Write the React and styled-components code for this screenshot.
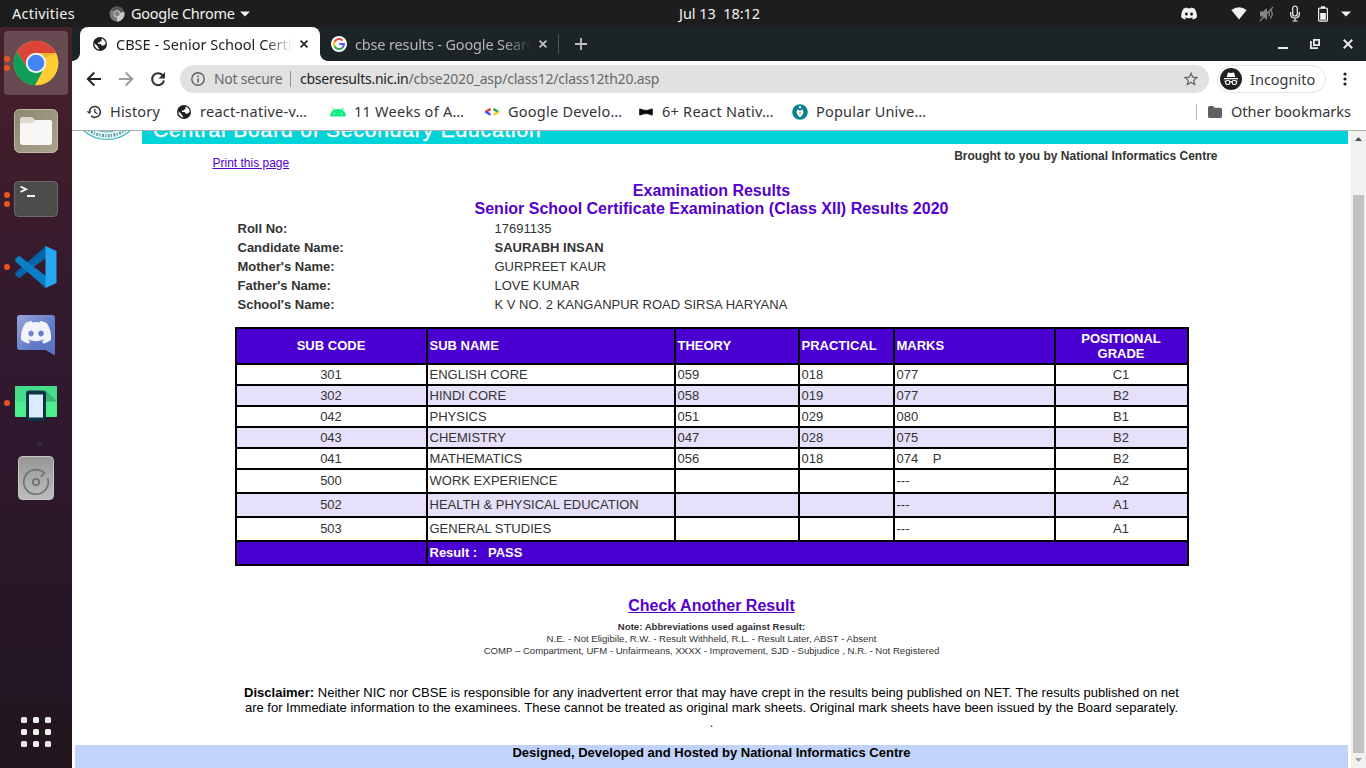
import React from "react";
import styled, { createGlobalStyle } from "styled-components";

const Global = createGlobalStyle`
  *, *::before, *::after { box-sizing: border-box; }
  html, body { margin: 0; padding: 0; background: #fff; overflow: hidden; }
  svg { display: block; flex: none; }
`;

const Desktop = styled.div`
  width: 1366px;
  height: 768px;
  overflow: hidden;
  display: flex;
  flex-direction: column;
  font-family: "Noto Sans", sans-serif;
  font-size: 14.5px;
`;

const Label = styled.span`
  white-space: pre;
  letter-spacing: ${(p) => p.$track || 0}px;
  color: ${(p) => p.$color || "inherit"};
  width: ${(p) => (p.$w ? p.$w + "px" : "auto")};
  flex: none;
  line-height: 20px;
  padding-bottom: ${(p) => p.$lift || 0}px;
`;

/* ---------- system bar ---------- */
const TopBar = styled.header`
  height: 27px;
  flex: none;
  background: #1d1d1d;
  color: #f2f2f2;
  display: grid;
  grid-template-columns: 679px 83px 1fr;
  align-items: center;
`;
const BarLeft = styled.div`
  display: flex;
  align-items: center;
  padding-left: 12px;
`;
const AppMenu = styled.div`
  display: flex;
  align-items: center;
  margin-left: 34px;
  gap: 6px;
`;
const Tray = styled.div`
  display: flex;
  align-items: center;
  justify-content: flex-end;
  padding-right: 15px;
`;
const TrayIcon = styled.span`
  margin-left: ${(p) => p.$gap || 0}px;
`;

const Main = styled.div`
  flex: 1;
  min-height: 0;
  display: flex;
`;

/* ---------- dock ---------- */
const Dock = styled.nav`
  width: 72px;
  flex: none;
  background: linear-gradient(180deg, #47212a 0%, #3d1c2b 20%, #321a2f 40%, #2c172b 65%, #241623 88%, #22161d 100%);
  display: flex;
  flex-direction: column;
  align-items: center;
  padding: 4px 0;
`;
const DockItem = styled.div`
  position: relative;
  width: 64px;
  height: 64px;
  flex: none;
  margin-bottom: 4px;
  border-radius: 4px;
  display: grid;
  place-items: center;
  background: ${(p) => (p.$active ? "rgba(255,255,255,0.19)" : "transparent")};
`;
const Pips = styled.div`
  position: absolute;
  left: 0;
  top: 0;
  height: 64px;
  display: flex;
  flex-direction: column;
  justify-content: center;
  gap: 3px;
`;
const Pip = styled.i`
  width: 6px;
  height: 6px;
  border-radius: 50%;
  background: #e95420;
`;
const DockDivider = styled.div`
  width: 5px;
  height: 4px;
  margin: 3px 0 0 7px;
  background: #372743;
  flex: none;
`;
const AppsSlot = styled(DockItem)`
  margin-top: auto;
  margin-bottom: 0;
`;
const AppsGrid = styled.div`
  display: grid;
  grid-template-columns: repeat(3, 6px);
  gap: 6px;
`;
const AppsDot = styled.i`
  height: 6px;
  border-radius: 1.5px;
  background: #eeeeec;
`;

/* ---------- browser chrome ---------- */
const Browser = styled.main`
  flex: 1;
  min-width: 0;
  display: flex;
  flex-direction: column;
  background: #fff;
`;
const TabStrip = styled.div`
  height: 34px;
  flex: none;
  background: #1c2427;
  display: flex;
  padding-left: 8px;
`;
const Tab = styled.div`
  position: relative;
  width: ${(p) => p.$w}px;
  display: flex;
  align-items: center;
  padding-left: ${(p) => p.$pad}px;
  color: ${(p) => (p.$active ? "#202124" : "#b4b7b9")};
  background: ${(p) => (p.$active ? "#fff" : "transparent")};
  border-radius: 8px 8px 0 0;
  &::before, &::after {
    content: ${(p) => (p.$active ? '""' : "none")};
    position: absolute;
    bottom: 0;
    width: 8px;
    height: 8px;
  }
  &::before { left: -8px; background: radial-gradient(circle at 0 0, transparent 7.5px, #fff 8.3px); }
  &::after { right: -8px; background: radial-gradient(circle at 100% 0, transparent 7.5px, #fff 8.3px); }
`;
const TabTitle = styled.div`
  margin-left: ${(p) => p.$gap}px;
  width: ${(p) => p.$w}px;
  overflow: hidden;
  white-space: nowrap;
  line-height: 20px;
  padding-bottom: 1px;
  letter-spacing: ${(p) => p.$track || 0}px;
  mask-image: linear-gradient(90deg, #000 calc(100% - 26px), transparent);
`;
const TabClose = styled.span`
  margin-left: ${(p) => p.$gap}px;
`;
const NewTab = styled.div`
  display: flex;
  align-items: center;
  padding-left: 16px;
  border-left: 1px solid #50575a;
  height: 20px;
  align-self: center;
`;
const WindowButtons = styled.div`
  margin-left: auto;
  display: flex;
  align-items: center;
  padding-right: 13px;
`;

const Toolbar = styled.div`
  height: 35px;
  flex: none;
  display: flex;
  align-items: center;
  padding: 0 13px 0 14px;
`;
const NavIcons = styled.div`
  display: flex;
  gap: 16px;
  width: 94px;
`;
const Omnibox = styled.div`
  width: 1029px;
  height: 28px;
  border-radius: 14px;
  background: #e1e1e1;
  display: flex;
  align-items: center;
  padding: 0 11px;
  font-size: 14px;
`;
const UrlDivider = styled.i`
  width: 1px;
  height: 16px;
  background: #8f8f8f;
  margin-right: 9px;
`;
const StarSlot = styled.span`
  margin-left: auto;
`;
const Profile = styled.div`
  margin-left: 8px;
  width: 109px;
  height: 28px;
  border: 1px solid #e3e3e3;
  border-radius: 14px;
  display: flex;
  align-items: center;
  padding-left: 2px;
  gap: 8px;
  color: #3a3b3e;
`;
const MenuSlot = styled.span`
  margin-left: auto;
  padding-right: 6px;
`;

const Bookmarks = styled.div`
  height: 35px;
  flex: none;
  border-bottom: 1px solid #aeaeae;
  display: flex;
  align-items: center;
  padding: 0 15px 2px 14px;
  color: #333538;
`;
const Bookmark = styled.div`
  display: flex;
  align-items: center;
  width: ${(p) => p.$w}px;
  gap: ${(p) => p.$gap || 8}px;
`;
const OtherBookmarks = styled.div`
  margin-left: auto;
  display: flex;
  align-items: center;
  height: 16px;
  border-left: 1px solid #b4b4b4;
  padding-left: 11px;
  gap: 9px;
`;

/* ---------- web page ---------- */
const Viewport = styled.div`
  flex: 1;
  min-height: 0;
  display: flex;
`;
const Page = styled.div`
  width: 1276px;
  margin-right: 3px;
  flex: none;
  overflow: hidden;
  display: flex;
  flex-direction: column;
  font: 13px/15px "Liberation Sans", Arial, sans-serif;
  color: #333;
`;
const Masthead = styled.div`
  height: 13px;
  flex: none;
  display: flex;
  overflow: hidden;
`;
const Emblem = styled.div`
  width: 70px;
  height: 13px;
`;
const MastTitle = styled.div`
  flex: 1;
  display: flex;
  align-items: flex-end;
  background: #00d4d8;
  color: #fff;
  font-size: 21px;
  letter-spacing: 0.84px;
  -webkit-text-stroke: 0.35px #fff;
  line-height: 20px;
  padding: 0 0 4px 11px;
  white-space: nowrap;
`;
const SubHead = styled.div`
  display: flex;
  justify-content: space-between;
  height: 38px;
  padding: 5px 130.5px 0 140.5px;
  font-size: 12px;
  line-height: 14px;
`;
const PrintLink = styled.a`
  padding-top: 7px;
  color: #50c;
  text-decoration: underline;
`;
const Headline = styled.h1`
  margin: 0;
  padding-left: 3px;
  height: 37px;
  text-align: center;
  font-size: 16px;
  line-height: 18px;
  color: #50c;
`;
const Details = styled.dl`
  margin: 0 0 0 165.5px;
  display: grid;
  grid-template-columns: 257px auto;
  grid-auto-rows: 19px;
  line-height: 19px;
`;
const Term = styled.dt`
  font-weight: bold;
`;
const Value = styled.dd`
  margin: 0;
  font-weight: ${(p) => (p.$bold ? "bold" : "normal")};
`;
const Marks = styled.div`
  width: 954px;
  margin: 13px 0 0 163px;
  padding: 2px;
  background: #000;
  display: flex;
  flex-direction: column;
  gap: 2px;
`;
const MarkRow = styled.div`
  display: grid;
  grid-template-columns: ${(p) => (p.$footer ? "189px 1fr" : "189px 246px 122px 93px 159px 131px")};
  gap: 2px;
  height: ${(p) => p.$h}px;
  font-weight: ${(p) => (p.$tone === "head" ? "bold" : "normal")};
  color: ${(p) => (p.$tone === "head" ? "#fff" : "#333")};
  --cell: ${(p) => ({ head: "#4900d0", alt: "#e6e0fa", plain: "#fff" })[p.$tone]};
  --lift: ${(p) => (p.$h % 2 ? 0 : 2)}px;
`;
const Cell = styled.div`
  background: var(--cell);
  display: flex;
  align-items: center;
  justify-content: ${(p) => (p.$center ? "center" : "flex-start")};
  text-align: ${(p) => (p.$center ? "center" : "left")};
  ${(p) => p.$tall && "--lift: 0px;"}
  padding: ${(p) => (p.$center ? "0 1px var(--lift) 0" : "0 1.5px var(--lift)")};
  white-space: pre;
`;
const Again = styled.a`
  align-self: center;
  margin: 31px 0 0 3px;
  font-size: 16px;
  line-height: 18px;
  font-weight: bold;
  color: #50c;
  text-decoration: underline;
`;
const Notes = styled.div`
  margin-top: 6px;
  padding-left: 3px;
  text-align: center;
  font-size: 9.6px;
  line-height: 12px;
`;
const Disclaimer = styled.p`
  margin: 28px 0 0;
  padding-left: 3px;
  text-align: center;
  color: #000;
  height: 60px;
`;
const Credit = styled.footer`
  margin-left: 3px;
  flex: 1;
  background: #c1d3fa;
  color: #000;
  font-weight: bold;
  text-align: center;
`;
const Scrollbar = styled.div`
  width: 15px;
  background: #f1f1f1;
  display: flex;
  flex-direction: column;
  align-items: center;
  padding-top: 6px;
`;
const Thumb = styled.div`
  width: 11px;
  height: 558px;
  flex: none;
  margin: 54px 0 5px;
  background: #c1c1c1;
`;

/* ---------- icons ---------- */
const DISCORD =
  "M20.3 4.4A19.8 19.8 0 0 0 15.4 2.9l-.6 1.2a18 18 0 0 0-5.600 0L8.600 2.900A19.700 19.700 0 0 0 3.700 4.400C.5 9 -.3 13.600.1 18.100a20 20 0 0 0 6 3l1.300-2-1.900-.9.5-.4a14.200 14.200 0 0 0 12.100 0l.5.4-1.900.9 1.300 2a19.800 19.800 0 0 0 6-3c.5-5.200-.8-9.700-3.600-13.700zM8 15.300c-1.200 0-2.200-1.100-2.200-2.400S6.800 10.500 8 10.500s2.200 1.100 2.200 2.400S9.200 15.300 8 15.300zm8 0c-1.200 0-2.200-1.100-2.200-2.400s1-2.400 2.200-2.400 2.200 1.100 2.200 2.400-1 2.400-2.200 2.400z";

const ChromeGrey = () => (
  <svg width="16" height="16" viewBox="0 0 16 16">
    <circle cx="8" cy="8" r="7.500" fill="#777" />
    <path d="M8 8 15 5.500A7.500 7.500 0 0 1 8 15.500z" fill="#c9c9c9" />
    <path d="M8 8 2 3.500A7.500 7.500 0 0 1 15 5.500z" fill="#575757" />
    <circle cx="8" cy="7.800" r="3.500" fill="#ddd" />
    <circle cx="8" cy="7.800" r="2.700" fill="#818181" />
  </svg>
);
const Caret = ({ w = 10 }) => (
  <svg width={w} height="6" viewBox="0 0 10 6"><path d="M0 .5h10L5 5.500z" fill="#f2f2f2" /></svg>
);
const ChromeIcon = () => (
  <svg width="46" height="46" viewBox="-23 -23 46 46">
    <circle r="22.300" fill="#fc3" />
    <path d="M-19.300-11.200A22.300 22.300 0 0 1 20-9.800H0L-8.500 4.900z" fill="#db4437" />
    <path d="M-19.300-11.200-8.500 4.900 0 9.800 8.500 5-.8 22.300A22.300 22.300 0 0 1-19.300-11.200z" fill="#0f9d58" />
    <path d="M20-9.800A22.300 22.300 0 0 1-.8 22.300L8.500 4.900 0-9.800z" fill="#ffcc33" />
    <path d="M0-9.800H20L8.500-5z" fill="#d9a51c" opacity=".55" />
    <circle r="10.200" fill="#f3f3f3" />
    <circle r="8.300" fill="#4285f4" />
  </svg>
);
const FilesIcon = () => (
  <svg width="46" height="46" viewBox="0 0 46 46">
    <defs><linearGradient id="files" x2="1" y2="1"><stop stopColor="#8d8671" /><stop offset="1" stopColor="#aaa48f" /></linearGradient></defs>
    <rect x="1.500" y="1.500" width="43" height="43" rx="5" fill="url(#files)" stroke="#c0b9a5" />
    <path d="M7 16V11q0-2 2-2h9q2 0 3 2l1 2H34v6H7z" fill="#ddd9cc" />
    <path d="M7 16q0-1 2-1h10l3-3H37q2 0 2 2v20q0 3-3 3H10q-3 0-3-3z" fill="#f8f7f5" />
  </svg>
);
const TerminalIcon = () => (
  <svg width="46" height="38" viewBox="0 0 46 38">
    <rect x="1.500" y="1.500" width="43" height="35" rx="4" fill="#4c4c4b" stroke="#6e6a6b" />
    <path d="M7.500 6.500 13 9.200 7.500 12M14 16h8" fill="none" stroke="#f4f4f4" strokeWidth="1.900" />
  </svg>
);
const CodeIcon = () => (
  <svg width="44" height="44" viewBox="0 0 44 44">
    <path d="M1.300 29.500Q.6 28.500 1.500 27.500L32 1v12L6 32.500Q4.500 33.500 3.300 32z" fill="#0065a9" />
    <path d="M1.300 14.500Q.6 15.500 1.500 16.500L32 43V31L6 11.500Q4.500 10.500 3.300 12z" fill="#0a7fc8" />
    <path d="M31.500 1 42.500 6V38L31.500 43z" fill="#25a7f2" />
  </svg>
);
const DiscordIcon = () => (
  <svg width="40" height="42" viewBox="0 0 40 42">
    <defs><linearGradient id="dc" x2="1" y2="1"><stop stopColor="#98a5dc" /><stop offset=".6" stopColor="#6079c9" /><stop offset="1" stopColor="#5570c4" /></linearGradient></defs>
    <path d="M1 4Q1 1 4 1H36q3 0 3 3V41.500L29.500 36H4q-3 0-3-3z" fill="url(#dc)" />
    <g transform="translate(5 4.500) scale(1.250)"><path d={DISCORD} fill="#f3f4fa" transform="translate(0 -1)" /></g>
  </svg>
);
const MirrorIcon = () => (
  <svg width="44" height="38" viewBox="0 0 44 38">
    <rect x="1" y="2" width="42" height="31" rx="1" fill="#4cee8e" />
    <rect x="1" y="2" width="42" height="15.500" rx="1" fill="#45dc8a" />
    <path d="M31 6 43 17.500H31z" fill="#37b474" />
    <rect x="12" y="6.500" width="20" height="30.500" rx="3" fill="#0c3346" />
    <rect x="15" y="10.500" width="14" height="23" fill="#d8ecfd" />
  </svg>
);
const DiskIcon = () => (
  <svg width="38" height="46" viewBox="0 0 38 46">
    <defs><linearGradient id="disk" x2="0" y2="1"><stop stopColor="#969696" /><stop offset="1" stopColor="#bdbdbd" /></linearGradient></defs>
    <rect x="1.500" y="1.500" width="35" height="43" rx="4" fill="url(#disk)" stroke="#c8c8c8" />
    <path d="M30.800 23.300A12.300 12.300 0 1 1 27.500 18L23.800 21.800" fill="none" stroke="#727272" strokeWidth="1.700" />
    <circle cx="19" cy="27" r="3.200" fill="none" stroke="#727272" strokeWidth="1.800" />
  </svg>
);

const DiscordTray = () => <svg width="16" height="13" viewBox="0 2 24 20"><path d={DISCORD} fill="#f2f2f2" /></svg>;
const WifiTray = () => <svg width="16" height="13" viewBox="0 0 16 13"><path d="M.3 3Q8-2.300 15.700 3L8 12.500z" fill="#f2f2f2" /></svg>;
const VolumeTray = () => (
  <svg width="16" height="16" viewBox="0 0 16 16" fill="none" stroke="#858585">
    <path d="M1 5.500h3L8 2v12L4 10.500H1z" fill="#858585" stroke="none" />
    <path d="M9.500 5.500q2 2.500 0 5M11.500 3.500q3.500 4.500 0 9M1 15 14 1" strokeWidth="1.300" />
  </svg>
);
const MicTray = () => (
  <svg width="10" height="17" viewBox="0 0 10 17" fill="none" stroke="#f2f2f2" strokeWidth="1.200">
    <rect x="2.700" y="1" width="4.600" height="10" rx="2.300" /><path d="M.7 7v2q0 4 4.300 4t4.300-4V7M5 13v3M2.500 16h5" />
  </svg>
);
const BatteryTray = () => (
  <svg width="10" height="16" viewBox="0 0 10 16">
    <rect x=".6" y="2.100" width="8.800" height="13.100" rx="1" fill="none" stroke="#f2f2f2" strokeWidth="1.200" />
    <path d="M3 .3h4v2H3zM2.200 7h5.600v6.800H2.200z" fill="#f2f2f2" />
  </svg>
);
const GlobeIcon = () => (
  <svg width="14" height="14" viewBox="0 0 14 14">
    <circle cx="7" cy="7" r="7" fill="#202124" />
    <path d="M1.300 6.300 4.700 9.300v1l1.300 1v1.300Q1.500 11.300 1.300 6.300zM8.500 1.500q3.800 1.200 4.200 5.200L11 8.500H8.500L7.700 7H5V5.500h1.700l.6-1.300h1.300z" fill="#fff" />
  </svg>
);
const GoogleIcon = () => (
  <svg width="16" height="16" viewBox="0 0 16 16" fill="none" strokeWidth="2">
    <circle cx="8" cy="8" r="8" fill="#fff" />
    <path d="M11.600 4.600A5 5 0 0 0 3.600 5.700" stroke="#ea4335" />
    <path d="M3.600 5.700a5 5 0 0 0 0 4.600" stroke="#fbbc05" />
    <path d="M3.600 10.300a5 5 0 0 0 7.800 1.400" stroke="#34a853" />
    <path d="M11.400 11.700A5 5 0 0 0 13 8H8.200" stroke="#4a5cf0" />
  </svg>
);
const CloseIcon = ({ color, size = 8, w = 1.7 }) => (
  <svg width={size} height={size} viewBox="0 0 8 8"><path d="M.6.6l6.800 6.800M7.400.6.6 7.400" stroke={color} strokeWidth={w} /></svg>
);
const PlusIcon = () => <svg width="12" height="12" viewBox="0 0 12 12"><path d="M6 0v12M0 6h12" stroke="#bfc2c3" strokeWidth="1.800" /></svg>;
const MinimizeIcon = () => <svg width="10" height="12" viewBox="0 0 10 12"><path d="M0 10h10" stroke="#e8eaea" strokeWidth="2" /></svg>;
const RestoreIcon = () => (
  <svg width="10" height="10" viewBox="0 0 10 10" fill="none" stroke="#e8eaea" strokeWidth="1.800"><path d="M3.900.9h5.200v5.200H3.900zM.9 2v7.100H8" /></svg>
);
const BackIcon = ({ color }) => (
  <svg width="16" height="16" viewBox="0 0 16 16" fill="none" stroke={color} strokeWidth="1.900"><path d="M15 8H2M8.300 1.500 1.800 8l6.500 6.500" /></svg>
);
const ForwardIcon = ({ color }) => (
  <svg width="16" height="16" viewBox="0 0 16 16" fill="none" stroke={color} strokeWidth="1.900"><path d="M1 8h13M7.700 1.500 14.200 8l-6.500 6.500" /></svg>
);
const ReloadIcon = () => (
  <svg width="16" height="16" viewBox="0 0 16 16"><path d="M12.500 4A6 6 0 1 0 14 9.500" fill="none" stroke="#303134" strokeWidth="2" /><path d="M15 1v6.500H8.500z" fill="#303134" /></svg>
);
const InfoIcon = () => (
  <svg width="14" height="14" viewBox="0 0 14 14"><circle cx="7" cy="7" r="6.200" fill="none" stroke="#5f6062" strokeWidth="1.400" /><path d="M6.300 6.200h1.500v4.300H6.300zM6.300 3.500h1.500v1.400H6.300z" fill="#5f6062" /></svg>
);
const StarIcon = () => (
  <svg width="14" height="14" viewBox="0 0 14 14"><path d="M7 1.300 8.700 5.200l4.200.4-3.200 2.800 1 4.200L7 10.400l-3.700 2.200 1-4.200L1.100 5.600l4.200-.4z" fill="none" stroke="#5f6062" strokeWidth="1.200" /></svg>
);
const IncognitoIcon = () => (
  <svg width="22" height="22" viewBox="0 0 22 22">
    <circle cx="11" cy="11" r="11" fill="#202124" />
    <path d="M8 4.500l3 .6 3-.6L15.300 9H6.700zM4 10h14v1.200H4z" fill="#fff" />
    <g fill="none" stroke="#fff" strokeWidth="1.100"><rect x="5.600" y="12.500" width="4.200" height="4" rx="1.700" /><rect x="12.200" y="12.500" width="4.200" height="4" rx="1.700" /><path d="M9.800 14q1.200-.8 2.400 0M4.500 13.200h1.500M16 13.200h1.500" /></g>
  </svg>
);
const MoreIcon = () => <svg width="4" height="14" viewBox="0 0 4 14" fill="#202124"><circle cx="2" cy="2" r="1.600" /><circle cx="2" cy="7" r="1.600" /><circle cx="2" cy="12" r="1.600" /></svg>;
const HistoryIcon = () => (
  <svg width="16" height="14" viewBox="0 0 16 14"><path d="M3.400 6.500a5.500 5.500 0 1 1 1.700 4.400" fill="none" stroke="#333538" strokeWidth="1.500" /><path d="M.6 6.200h5.200L3.200 9z" fill="#333538" /><path d="M8.800 3.800V7.200l2.600 1.600" fill="none" stroke="#333538" strokeWidth="1.300" /></svg>
);
const AndroidIcon = () => (
  <svg width="16" height="10" viewBox="0 0 16 10"><path d="M0 9.500Q.5 4.800 3.500 3L2.200.8l.7-.4L4.300 2.600Q8 1.200 11.700 2.600L13.100.4l.7.4L12.500 3q3 1.800 3.500 6.500z" fill="#0df080" /><circle cx="4.500" cy="6.500" r=".7" fill="#fff" /><circle cx="11.500" cy="6.500" r=".7" fill="#fff" /></svg>
);
const DevelopersIcon = () => (
  <svg width="16" height="10" viewBox="0 0 16 10" fill="none" strokeWidth="2.300"><path d="M1.500 5 6.500 2" stroke="#ea2d2d" /><path d="M1.300 4.600 6.500 7.800" stroke="#504bf5" /><path d="M9.500 2l5.200 3.200" stroke="#1fa34a" /><path d="M9.500 7.800 14.500 5" stroke="#fbc81c" /></svg>
);
const BowtieIcon = () => <svg width="14" height="8" viewBox="0 0 14 8"><path d="M.7.800Q0 4 .7 7.200L5.500 5.800h3l4.800 1.400Q14 4 13.300.8L8.500 2.200h-3z" fill="#080808" stroke="#080808" strokeWidth=".6" /></svg>;
const DropIcon = () => (
  <svg width="16" height="16" viewBox="0 0 16 16"><circle cx="8" cy="8" r="7.800" fill="#08838d" /><circle cx="8" cy="3.300" r="1.200" fill="#fff" /><path d="M5.200 5.500 8 6.800l2.800-1.300q1.800 4.300-2.800 8-4.600-3.700-2.800-8z" fill="#fff" /><path d="M6.500 7.500 8 8.500l1.500-1L8 10.500z" fill="#e2a43a" /></svg>
);
const FolderIcon = () => <svg width="14" height="12" viewBox="0 0 14 12"><path d="M0 1.500Q0 0 1.500 0H5l1.500 1.700h6q1.500 0 1.500 1.500v7.300Q14 12 12.500 12h-11Q0 12 0 10.500z" fill="#5f6063" /></svg>;
const SealIcon = () => (
  <svg width="70" height="13" viewBox="0 0 70 13" fill="none">
    <circle cx="35" cy="-26.500" r="35" fill="#f1fafa" stroke="#35b4bc" strokeWidth="1.200" />
    <circle cx="35" cy="-26.500" r="31.300" stroke="#4f9da5" strokeWidth="3.200" strokeDasharray="1.900 1.500 1.200 1.200" />
    <circle cx="35" cy="-26.500" r="27.500" fill="#e3f3f4" stroke="#35b4bc" strokeWidth=".9" />
  </svg>
);
const ScrollArrow = ({ up }) => (
  <svg width="7" height="4" viewBox="0 0 7 4"><path d={up ? "M0 4 3.500 0 7 4z" : "M0 0h7L3.500 4z"} fill={up ? "#505050" : "#a3a3a3"} /></svg>
);

/* ---------- data ---------- */
const details = [
  ["Roll No:", "17691135"],
  ["Candidate Name:", "SAURABH INSAN", true],
  ["Mother's Name:", "GURPREET KAUR"],
  ["Father's Name:", "LOVE KUMAR"],
  ["School's Name:", "K V NO. 2 KANGANPUR ROAD SIRSA HARYANA"],
];
const subjects = [
  ["301", "ENGLISH CORE", "059", "018", "077", "C1"],
  ["302", "HINDI CORE", "058", "019", "077", "B2"],
  ["042", "PHYSICS", "051", "029", "080", "B1"],
  ["043", "CHEMISTRY", "047", "028", "075", "B2"],
  ["041", "MATHEMATICS", "056", "018", "074\u00a0\u00a0\u00a0 P", "B2"],
  ["500", "WORK EXPERIENCE", "", "", "---", "A2"],
  ["502", "HEALTH & PHYSICAL EDUCATION", "", "", "---", "A1"],
  ["503", "GENERAL STUDIES", "", "", "---", "A1"],
];
const headings = ["SUB CODE", "SUB NAME", "THEORY", "PRACTICAL", "MARKS", "POSITIONAL\nGRADE"];
const toneOf = (i) => ([1, 3, 6].includes(i) ? "alt" : "plain");

const dockApps = [
  { Icon: ChromeIcon, windows: 2, active: true },
  { Icon: FilesIcon, windows: 0 },
  { Icon: TerminalIcon, windows: 2 },
  { Icon: CodeIcon, windows: 1 },
  { Icon: DiscordIcon, windows: 0 },
  { Icon: MirrorIcon, windows: 1 },
];
const bookmarks = [
  { Icon: HistoryIcon, text: "History", w: 91, track: 0.17 },
  { Icon: GlobeIcon, text: "react-native-v…", w: 153, track: 0.25, gap: 9 },
  { Icon: AndroidIcon, text: "11 Weeks of A…", w: 154, track: 0.25 },
  { Icon: DevelopersIcon, text: "Google Develo…", w: 155, track: 0.25 },
  { Icon: BowtieIcon, text: "6+ React Nativ…", w: 153, track: 0.25, gap: 9 },
  { Icon: DropIcon, text: "Popular Unive…", w: 140, track: 0.2 },
];

const CellRow = ({ cells, tone, h }) => (
  <MarkRow $tone={tone} $h={h}>
    {cells.map((c, i) => <Cell key={i} $center={i === 0 || i === 5} $tall={c.includes("\n")}>{c}</Cell>)}
  </MarkRow>
);

export default function App() {
  return (
    <Desktop>
      <Global />
      <TopBar>
        <BarLeft>
          <Label $track={0.25} $w={63} $lift={2}>Activities</Label>
          <AppMenu>
            <ChromeGrey />
            <Label $track={-0.25} $w={103} $lift={2}>Google Chrome</Label>
            <Caret />
          </AppMenu>
        </BarLeft>
        <Label $track={-0.05} $lift={2}>{"Jul 13  18:12"}</Label>
        <Tray>
          <TrayIcon><DiscordTray /></TrayIcon>
          <TrayIcon $gap={34}><WifiTray /></TrayIcon>
          <TrayIcon $gap={12}><VolumeTray /></TrayIcon>
          <TrayIcon $gap={15}><MicTray /></TrayIcon>
          <TrayIcon $gap={18}><BatteryTray /></TrayIcon>
          <TrayIcon $gap={13}><Caret /></TrayIcon>
        </Tray>
      </TopBar>
      <Main>
        <Dock>
          {dockApps.map(({ Icon, windows, active }, i) => (
            <DockItem key={i} $active={active}>
              <Pips>{Array.from({ length: windows }, (_, k) => <Pip key={k} />)}</Pips>
              <Icon />
            </DockItem>
          ))}
          <DockDivider />
          <DockItem><DiskIcon /></DockItem>
          <AppsSlot>
            <AppsGrid>{Array.from({ length: 9 }, (_, k) => <AppsDot key={k} />)}</AppsGrid>
          </AppsSlot>
        </Dock>
        <Browser>
          <TabStrip>
            <Tab $active $w={240} $pad={13}>
              <GlobeIcon />
              <TabTitle $gap={9} $w={176}>CBSE - Senior School Certificate</TabTitle>
              <TabClose $gap={8}><CloseIcon color="#202124" /></TabClose>
            </Tab>
            <Tab $w={238} $pad={11}>
              <GoogleIcon />
              <TabTitle $gap={8} $w={176} $track={-0.15}>cbse results - Google Search</TabTitle>
              <TabClose $gap={8}><CloseIcon color="#c3c6c7" /></TabClose>
            </Tab>
            <NewTab><PlusIcon /></NewTab>
            <WindowButtons>
              <TrayIcon><MinimizeIcon /></TrayIcon>
              <TrayIcon $gap={22}><RestoreIcon /></TrayIcon>
              <TrayIcon $gap={23}><CloseIcon color="#e8eaea" size={10} w={1.6} /></TrayIcon>
            </WindowButtons>
          </TabStrip>
          <Toolbar>
            <NavIcons>
              <BackIcon color="#202124" />
              <ForwardIcon color="#9c9c9c" />
              <ReloadIcon />
            </NavIcons>
            <Omnibox>
              <Label $w={23}><InfoIcon /></Label>
              <Label $w={76} $track={-0.27} $color="#666769">Not secure</Label>
              <UrlDivider />
              <Label $track={-0.24} $color="#202124">cbseresults.nic.in</Label>
              <Label $track={-0.22} $color="#68696b">/cbse2020_asp/class12/class12th20.asp</Label>
              <StarSlot><StarIcon /></StarSlot>
            </Omnibox>
            <Profile><IncognitoIcon /><Label>Incognito</Label></Profile>
            <MenuSlot><MoreIcon /></MenuSlot>
          </Toolbar>
          <Bookmarks>
            {bookmarks.map(({ Icon, text, w, track, gap }) => (
              <Bookmark key={text} $w={w} $gap={gap}><Icon /><Label $track={track} $lift={2}>{text}</Label></Bookmark>
            ))}
            <OtherBookmarks><FolderIcon /><Label $lift={2}>Other bookmarks</Label></OtherBookmarks>
          </Bookmarks>
          <Viewport>
            <Page>
              <Masthead>
                <Emblem><SealIcon /></Emblem>
                <MastTitle>Central Board of Secondary Education</MastTitle>
              </Masthead>
              <SubHead>
                <PrintLink>Print this page</PrintLink>
                <b>Brought to you by National Informatics Centre</b>
              </SubHead>
              <Headline>
                Examination Results<br />Senior School Certificate Examination (Class XII) Results 2020
              </Headline>
              <Details>
                {details.map(([k, v, bold]) => (
                  <React.Fragment key={k}><Term>{k}</Term><Value $bold={bold}>{v}</Value></React.Fragment>
                ))}
              </Details>
              <Marks>
                <CellRow cells={headings} tone="head" h={34} />
                {subjects.map((s, i) => <CellRow key={s[0]} cells={s} tone={toneOf(i)} h={i < 5 ? 19 : 22} />)}
                <MarkRow $tone="head" $h={22} $footer>
                  <Cell />
                  <Cell>{"Result :   PASS"}</Cell>
                </MarkRow>
              </Marks>
              <Again>Check Another Result</Again>
              <Notes>
                <b>Note: Abbreviations used against Result:</b><br />
                N.E. - Not Eligibile, R.W. - Result Withheld, R.L. - Result Later, ABST - Absent<br />
                COMP – Compartment, UFM - Unfairmeans, XXXX - Improvement, SJD - Subjudice , N.R. - Not Registered
              </Notes>
              <Disclaimer>
                <b>Disclaimer:</b> Neither NIC nor CBSE is responsible for any inadvertent error that may have crept in the results being published on NET. The results published on net<br />
                are for Immediate information to the examinees. These cannot be treated as original mark sheets. Original mark sheets have been issued by the Board separately.<br />.
              </Disclaimer>
              <Credit>Designed, Developed and Hosted by National Informatics Centre</Credit>
            </Page>
            <Scrollbar>
              <ScrollArrow up />
              <Thumb />
              <ScrollArrow />
            </Scrollbar>
          </Viewport>
        </Browser>
      </Main>
    </Desktop>
  );
}
